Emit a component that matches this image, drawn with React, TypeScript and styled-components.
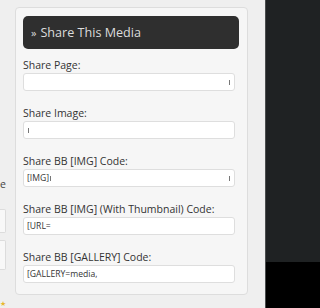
import { createGlobalStyle, styled } from 'styled-components';

const GlobalStyle = createGlobalStyle`
  html, body {
    margin: 0;
    padding: 0;
    background: #efefef;
  }
  body {
    font-family: 'Open Sans', 'DejaVu Sans', sans-serif;
    color: #333;
  }
`;

const Page = styled.div`
  display: flex;
  width: 100%;
  min-width: 300px;
  height: 308px;
  overflow: hidden;
`;

const Sidebar = styled.div`
  width: 15px;
  flex-shrink: 0;
  display: flex;
  flex-direction: column;
  overflow: hidden;
  padding-top: 177px;
`;

const SideText = styled.div`
  height: 14px;
  font-size: 10.5px;
  line-height: 14px;
  color: #444;
`;

const SideBox = styled.div<{ $height: number; $gap: number }>`
  width: 5px;
  height: ${({ $height }) => $height}px;
  margin-top: ${({ $gap }) => $gap}px;
  background: #f8f8f8;
  border: 1px solid #dcdcdc;
  border-left: none;
  border-radius: 0 2px 2px 0;
`;

const SideStar = styled.div`
  margin-top: 30px;
  font-size: 7px;
  line-height: 8px;
  color: #e8b830;
`;

const Gutter = styled.div`
  width: 250px;
  flex-shrink: 0;
  padding-top: 7px;
`;

const Panel = styled.section`
  width: 216px;
  background: #f6f6f6;
  border: 1px solid #dddddd;
  border-radius: 4px;
  padding: 8px 8px 11px 7px;
`;

const Header = styled.h3`
  margin: 0;
  height: 33px;
  display: flex;
  align-items: center;
  gap: 4px;
  padding-left: 8px;
  background: #2f2f2f;
  border-radius: 5px;
  color: #dcdcdc;
  font-size: 12.6px;
  font-weight: normal;
`;

const Chevron = styled.span`
  font-size: 11px;
  margin-top: -1px;
`;

const Row = styled.div`
  display: flex;
  flex-direction: column;
  margin-top: 8px;

  & + & {
    margin-top: 14px;
  }
`;

const Label = styled.label`
  font-size: 10.5px;
  line-height: 16px;
  color: #333;
  white-space: nowrap;
`;

const Field = styled.div`
  width: 212px;
  height: 18px;
  box-sizing: border-box;
  display: flex;
  align-items: center;
  padding: 0 4px 0 3px;
  background: #fff;
  border: 1px solid #dedede;
  border-radius: 3px;
  font-size: 8.6px;
  color: #333;
  white-space: nowrap;
  overflow: hidden;
`;

const Caret = styled.span<{ $end?: boolean }>`
  width: 1px;
  height: 5px;
  background: #777;
  margin-left: ${({ $end }) => ($end ? 'auto' : '1px')};
  flex-shrink: 0;
`;

const Screen = styled.div`
  flex: 1;
  display: flex;
  flex-direction: column;
  border-left: 1px solid #4a4d4e;
`;

const ScreenTop = styled.div`
  height: 262px;
  background: #1f2223;
`;

const ScreenBottom = styled.div`
  flex: 1;
  background: #000;
`;

type FieldSpec = {
  label: string;
  value: string;
  caretAfter?: boolean;
  caretEnd?: boolean;
};

const fields: FieldSpec[] = [
  { label: 'Share Page:', value: '', caretEnd: true },
  { label: 'Share Image:', value: '', caretAfter: true },
  { label: 'Share BB [IMG] Code:', value: '[IMG]', caretAfter: true, caretEnd: true },
  { label: 'Share BB [IMG] (With Thumbnail) Code:', value: '[URL=' },
  { label: 'Share BB [GALLERY] Code:', value: '[GALLERY=media,' },
];

export default function App() {
  return (
    <>
      <GlobalStyle />
      <Page>
        <Sidebar>
          <SideText>e</SideText>
          <SideBox $height={22} $gap={18} />
          <SideBox $height={29} $gap={7} />
          <SideStar>★</SideStar>
        </Sidebar>
        <Gutter>
          <Panel>
            <Header>
              <Chevron>»</Chevron>
              Share This Media
            </Header>
            {fields.map((f) => (
              <Row key={f.label}>
                <Label>{f.label}</Label>
                <Field>
                  {f.value}
                  {f.caretAfter && <Caret />}
                  {f.caretEnd && <Caret $end />}
                </Field>
              </Row>
            ))}
          </Panel>
        </Gutter>
        <Screen>
          <ScreenTop />
          <ScreenBottom />
        </Screen>
      </Page>
    </>
  );
}
